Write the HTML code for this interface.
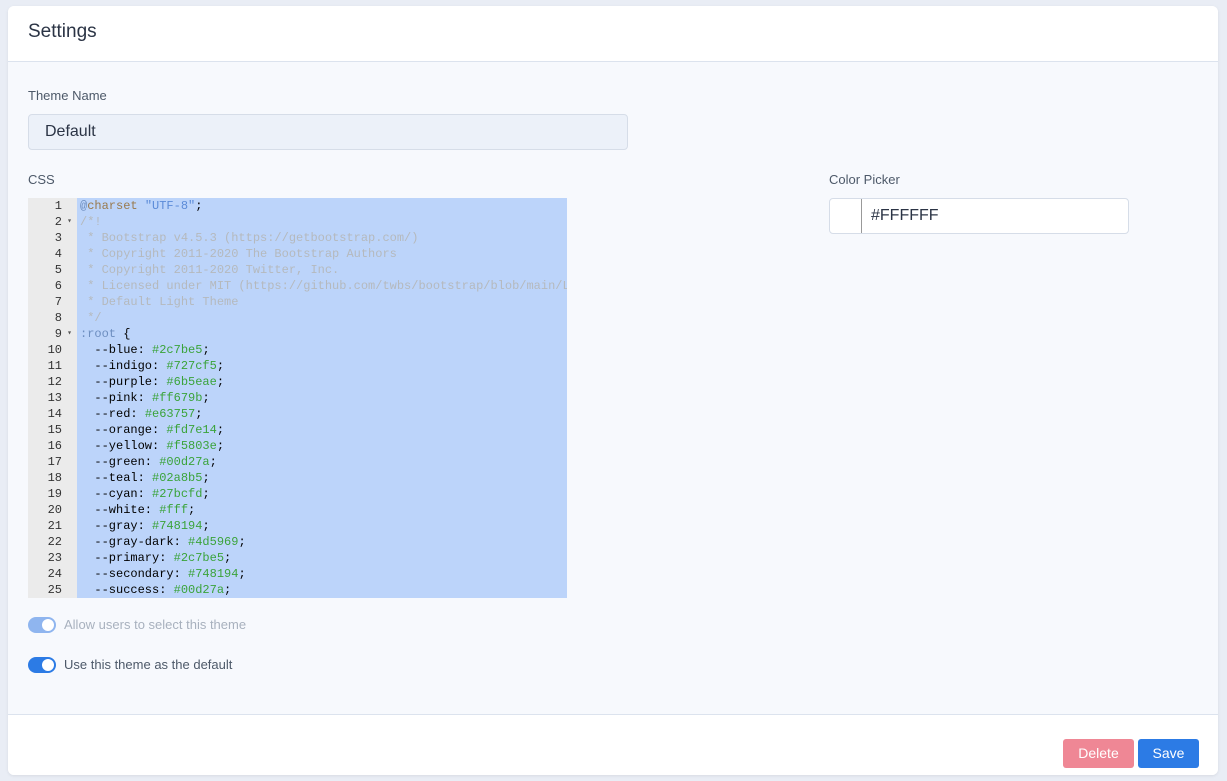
<!DOCTYPE html>
<html><head><style>
*{box-sizing:border-box;margin:0;padding:0}
body{width:1227px;height:781px;background:#e9edf5;font-family:"Liberation Sans",sans-serif;position:relative;overflow:hidden}
.card{position:absolute;left:8px;top:6px;width:1210px;height:769px;background:#f7f9fd;border-radius:6px;overflow:hidden;box-shadow:0 1px 3px rgba(0,0,0,.08)}
.hdr{position:absolute;left:0;top:0;width:100%;height:56px;background:#fff;border-bottom:1px solid #dce3ee}
.hdr h1{position:absolute;left:20px;top:15px;font-size:19px;font-weight:normal;color:#2b3445}
.lbl{position:absolute;font-size:13px;color:#4d5969}
.inp{position:absolute;left:20px;top:108px;width:600px;height:36px;background:#ecf1f9;border:1px solid #d6dde8;border-radius:4px;font-size:16px;color:#2b3445;padding:8px 16px}
.code{position:absolute;left:20px;top:192px;width:539px;height:400px;background:#bcd4fa;font-family:"Liberation Mono",monospace;font-size:12px;line-height:16px}
.gut{position:absolute;left:0;top:0;width:49px;height:400px;background:#ebebeb;color:#333;text-align:right}
.gut div{padding-right:15px;position:relative}
.gut div.f::after{content:"▾";position:absolute;right:5px;font-size:8px;color:#555}
.src{position:absolute;left:52px;top:0;white-space:pre;color:#000;width:487px;overflow:hidden}
.c{color:#b5b9bd}.k{color:#6d8ec0}.a{color:#997a4e}.s{color:#5b8bd8}.g{color:#3aa33a}
.cp{position:absolute;left:821px;top:192px;width:300px;height:36px;background:#fff;border:1px solid #d6dde8;border-radius:4px}
.cp .sw{position:absolute;left:31px;top:0;width:1px;height:34px;background:#999}
.cp span{position:absolute;left:41px;top:8px;font-size:16px;color:#2b3445}
.tg{position:absolute;left:20px;width:28px;height:16px;border-radius:8px;background:#2c7be5}
.tg::after{content:"";position:absolute;right:2px;top:2px;width:12px;height:12px;border-radius:6px;background:#fff}
.ft{position:absolute;left:0;top:708px;width:100%;height:61px;background:#fff;border-top:1px solid #dce3ee}
.btn{position:absolute;top:24px;height:29px;border-radius:3px;color:#fff;font-size:14px;text-align:center;line-height:29px}
</style></head><body>
<div class="card">
<div class="hdr"><h1>Settings</h1></div>
<div class="lbl" style="left:20px;top:82px">Theme Name</div>
<div class="inp">Default</div>
<div class="lbl" style="left:20px;top:166px">CSS</div>
<div class="lbl" style="left:821px;top:166px">Color Picker</div>
<div class="code">
<div class="gut"><div>1</div><div class="f">2</div><div>3</div><div>4</div><div>5</div><div>6</div><div>7</div><div>8</div><div class="f">9</div><div>10</div><div>11</div><div>12</div><div>13</div><div>14</div><div>15</div><div>16</div><div>17</div><div>18</div><div>19</div><div>20</div><div>21</div><div>22</div><div>23</div><div>24</div><div>25</div></div>
<div class="src"><span class="k">@</span><span class="a">charset</span> <span class="s">"UTF-8"</span>;
<span class="c">/*!</span>
<span class="c"> * Bootstrap v4.5.3 (https://getbootstrap.com/)</span>
<span class="c"> * Copyright 2011-2020 The Bootstrap Authors</span>
<span class="c"> * Copyright 2011-2020 Twitter, Inc.</span>
<span class="c"> * Licensed under MIT (https://github.com/twbs/bootstrap/blob/main/LICENSE)</span>
<span class="c"> * Default Light Theme</span>
<span class="c"> */</span>
<span class="k">:root</span> {
  --blue: <span class="g">#2c7be5</span>;
  --indigo: <span class="g">#727cf5</span>;
  --purple: <span class="g">#6b5eae</span>;
  --pink: <span class="g">#ff679b</span>;
  --red: <span class="g">#e63757</span>;
  --orange: <span class="g">#fd7e14</span>;
  --yellow: <span class="g">#f5803e</span>;
  --green: <span class="g">#00d27a</span>;
  --teal: <span class="g">#02a8b5</span>;
  --cyan: <span class="g">#27bcfd</span>;
  --white: <span class="g">#fff</span>;
  --gray: <span class="g">#748194</span>;
  --gray-dark: <span class="g">#4d5969</span>;
  --primary: <span class="g">#2c7be5</span>;
  --secondary: <span class="g">#748194</span>;
  --success: <span class="g">#00d27a</span>;</div>
</div>
<div class="cp"><div class="sw"></div><span>#FFFFFF</span></div>
<div class="tg" style="top:611px;background:#8fb5ef"></div>
<div class="lbl" style="left:56px;top:611px;color:#a8b1be">Allow users to select this theme</div>
<div class="tg" style="top:651px"></div>
<div class="lbl" style="left:56px;top:651px">Use this theme as the default</div>
<div class="ft">
<div class="btn" style="left:1055px;width:71px;background:#ef8795">Delete</div>
<div class="btn" style="left:1130px;width:61px;background:#2c7be5">Save</div>
</div>
</div>
</body></html>
